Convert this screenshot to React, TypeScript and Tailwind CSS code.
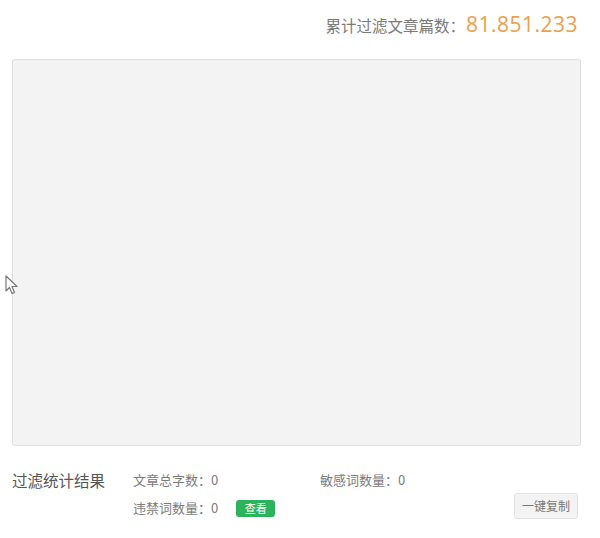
import React from "react";

const font = { fontFamily: '"Noto Sans CJK SC", "Open Sans", sans-serif' };

export default function App() {
  return (
    <div className="relative w-[600px] h-[538px] bg-white text-[#555]" style={font}>
      {/* header counter */}
      <div className="flex justify-end items-baseline pr-[22px] pt-[9px] h-[59px]">
        <span className="text-[15.5px] text-[#7a7a7a]">累计过滤文章篇数：</span>
        <span className="ml-[1px] text-[21px] text-[#e9a04f] tracking-[0.5px]" style={{ fontFamily: '"Open Sans", sans-serif' }}>
          81.851.233
        </span>
      </div>

      {/* text area */}
      <div className="mx-[12px] mr-[19px] h-[387px] rounded-[3px] border border-[#dedede] bg-[#f3f3f3]" />

      {/* stats */}
      <div className="flex pl-[12px] pr-[22px] pt-[23px]">
        <div className="w-[121px] text-[15.5px] text-[#555] leading-[22px]">过滤统计结果</div>
        <div className="flex-1 flex flex-col gap-[6px] text-[13px] text-[#7a7a7a]">
          <div className="flex leading-[22px]">
            <span className="w-[187px]">文章总字数：0</span>
            <span>敏感词数量：0</span>
          </div>
          <div className="flex items-center justify-between">
            <div className="flex items-center leading-[22px]">
              <span>违禁词数量：0</span>
              <span className="ml-[18px] w-[39px] h-[17px] flex items-center justify-center rounded-[3px] bg-[#2db35b] text-white text-[11px]">
                查看
              </span>
            </div>
            <span className="-mt-[4px] px-[7px] h-[26px] flex items-center rounded-[3px] border border-[#e2e2e2] bg-[#f3f3f3] text-[12px] text-[#777]">
              一键复制
            </span>
          </div>
        </div>
      </div>

      {/* mouse cursor */}
      <svg className="absolute left-[5px] top-[275px]" width="14" height="20" viewBox="0 0 14 20">
        <path d="M1 1 L1 16 L4.5 12.5 L7 18.5 L9.5 17.5 L7 11.5 L12 11.5 Z" fill="#fff" stroke="#777" strokeWidth="1.2" strokeLinejoin="round" />
      </svg>
    </div>
  );
}
